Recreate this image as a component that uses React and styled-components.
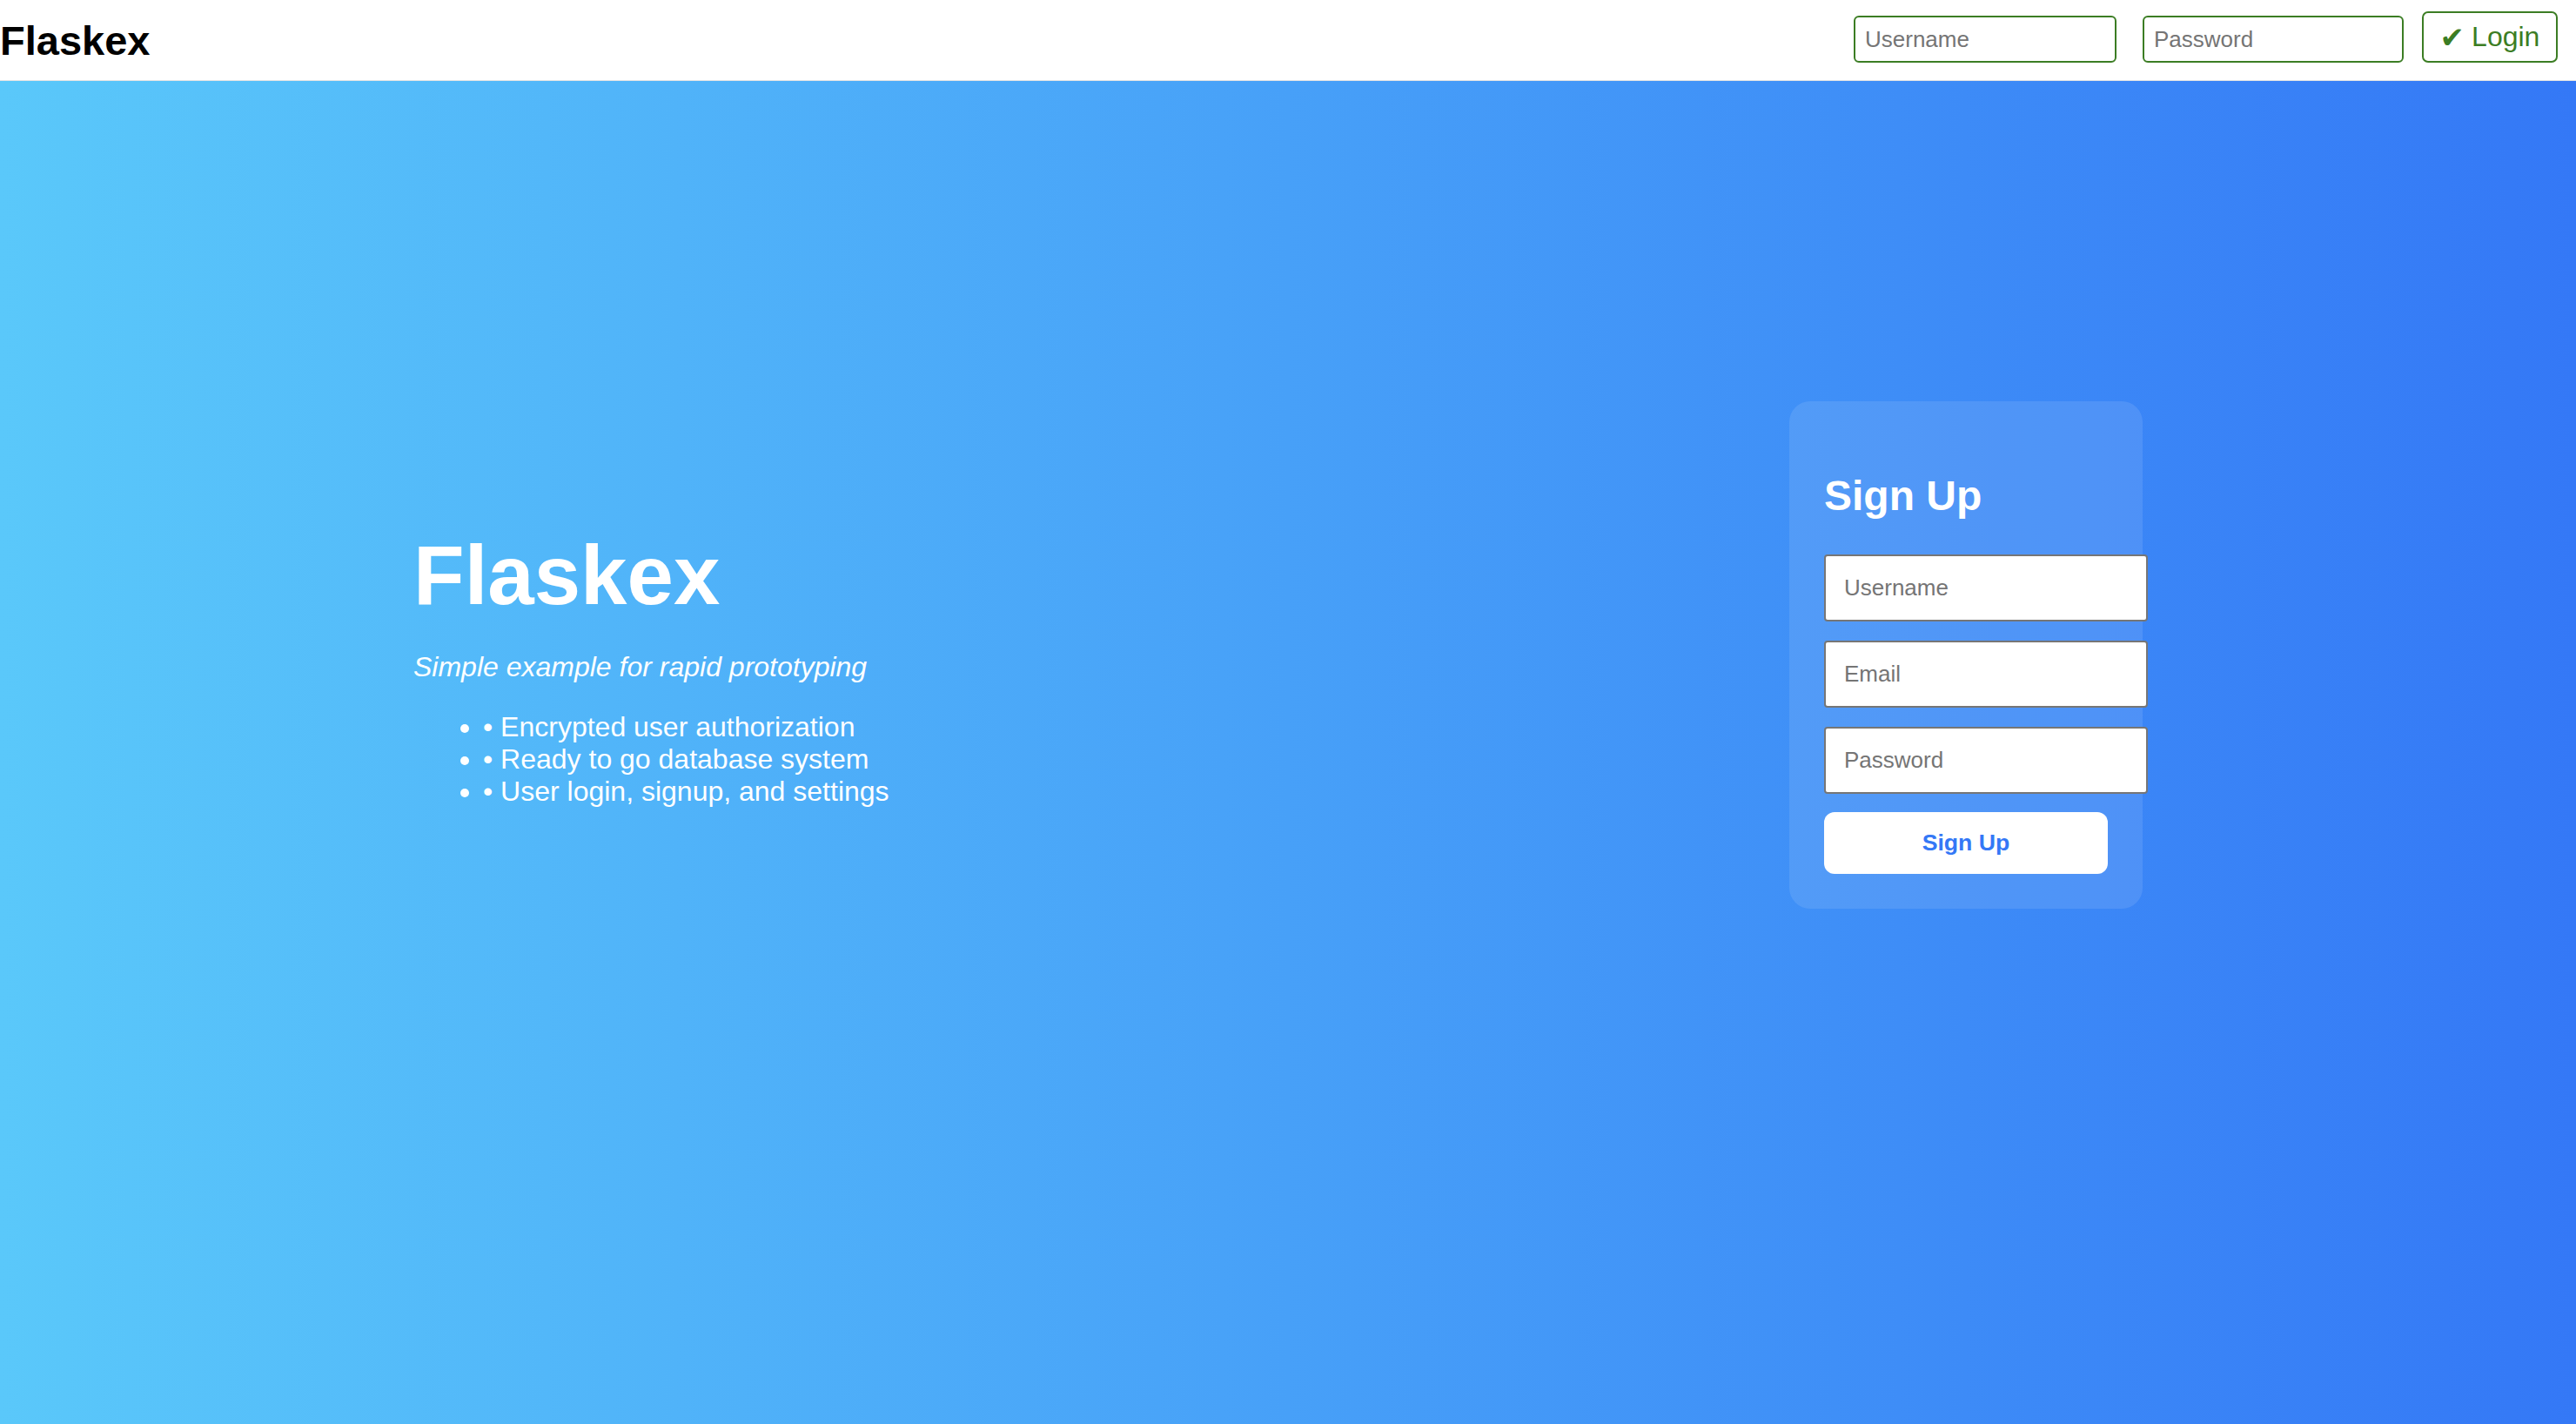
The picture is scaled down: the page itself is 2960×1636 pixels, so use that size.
import React from "react";
import styled, { createGlobalStyle } from "styled-components";

const GlobalStyle = createGlobalStyle`
  html, body {
    margin: 0;
    padding: 0;
  }
  body {
    font-family: "Liberation Sans", Arial, sans-serif;
    background: #ffffff;
  }
  * { box-sizing: border-box; }
`;

const Page = styled.div`
  display: flex;
  flex-direction: column;
  min-height: 1636px;
`;

const Header = styled.header`
  display: flex;
  justify-content: space-between;
  align-items: center;
  height: 93px;
  background: #ffffff;
  border-bottom: 1px solid #e4e4e4;
`;

const Logo = styled.h1`
  margin: 0;
  font-size: 47px;
  font-weight: 700;
  color: #000000;
  line-height: normal;
`;

const LoginForm = styled.form`
  display: flex;
  align-items: flex-end;
  align-self: flex-end;
  padding: 0 21px 20px 0;
`;

const HeaderInput = styled.input`
  width: ${(p) => p.$w}px;
  height: 54px;
  margin-right: ${(p) => p.$gap}px;
  padding: 0 11px;
  border: 2px solid #3c7d24;
  border-radius: 6px;
  font-family: "Liberation Sans", Arial, sans-serif;
  font-size: 26px;
  color: #222;
  background: #fff;
  outline: none;
  &::placeholder { color: #757575; }
`;

const LoginButton = styled.button`
  display: flex;
  align-items: center;
  gap: 8px;
  height: 59px;
  width: 156px;
  justify-content: center;
  padding: 0 16px;
  border: 2px solid #3c7d24;
  border-radius: 7px;
  background: #ffffff;
  color: #3c7d24;
  font-family: "Liberation Sans", Arial, sans-serif;
  font-size: 32px;
  cursor: pointer;
`;

const Check = styled.span`
  font-family: "DejaVu Sans", sans-serif;
  font-size: 34px;
  font-weight: 700;
  line-height: 1;
`;

const Main = styled.main`
  flex: 1;
  display: flex;
  justify-content: space-between;
  align-items: flex-start;
  padding: 368px 498px 0 475px;
  background: linear-gradient(to right, #5ac8fa 0%, #3478f6 100%);
`;

const Hero = styled.section`
  margin-top: 145px;
  color: #ffffff;
`;

const HeroTitle = styled.h1`
  margin: 0 0 32px;
  font-size: 96px;
  font-weight: 700;
  line-height: normal;
`;

const Tagline = styled.p`
  margin: 0 0 32px;
  font-size: 32px;
  font-style: italic;
  line-height: normal;
`;

const Features = styled.ul`
  margin: 0;
  padding-left: 80px;
  list-style: disc;
  font-size: 32px;
  line-height: normal;
`;

const Card = styled.div`
  width: 406px;
  padding: 41px 40px 40px;
  border-radius: 24px;
  background: rgba(255, 255, 255, 0.1);
  color: #ffffff;
`;

const CardTitle = styled.h2`
  margin: 40px 0;
  font-size: 48px;
  font-weight: 700;
  line-height: normal;
`;

const Field = styled.input`
  display: block;
  width: 372px;
  height: 77px;
  margin-bottom: 22px;
  padding: 0 21px;
  border: 2px solid #767676;
  border-radius: 4px;
  background: #ffffff;
  font-family: "Liberation Sans", Arial, sans-serif;
  font-size: 26px;
  color: #222;
  outline: none;
  &::placeholder { color: #757575; }
  &:last-of-type { margin-bottom: 21px; }
`;

const SubmitButton = styled.button`
  display: block;
  width: 100%;
  height: 71px;
  border: none;
  border-radius: 12px;
  background: #ffffff;
  color: #3478f6;
  font-family: "Liberation Sans", Arial, sans-serif;
  font-size: 26.67px;
  font-weight: 700;
  cursor: pointer;
`;

const features = [
  "Encrypted user authorization",
  "Ready to go database system",
  "User login, signup, and settings",
];

export default function App() {
  return (
    <Page>
      <GlobalStyle />
      <Header>
        <Logo>Flaskex</Logo>
        <LoginForm onSubmit={(e) => e.preventDefault()}>
          <HeaderInput $w={302} $gap={30} placeholder="Username" />
          <HeaderInput $w={300} $gap={21} type="password" placeholder="Password" />
          <LoginButton type="submit">
            <Check>✔</Check>
            <span>Login</span>
          </LoginButton>
        </LoginForm>
      </Header>
      <Main>
        <Hero>
          <HeroTitle>Flaskex</HeroTitle>
          <Tagline>Simple example for rapid prototyping</Tagline>
          <Features>
            {features.map((f) => (
              <li key={f}>• {f}</li>
            ))}
          </Features>
        </Hero>
        <Card>
          <CardTitle>Sign Up</CardTitle>
          <form onSubmit={(e) => e.preventDefault()}>
            <Field placeholder="Username" />
            <Field placeholder="Email" />
            <Field type="password" placeholder="Password" />
            <SubmitButton type="submit">Sign Up</SubmitButton>
          </form>
        </Card>
      </Main>
    </Page>
  );
}
